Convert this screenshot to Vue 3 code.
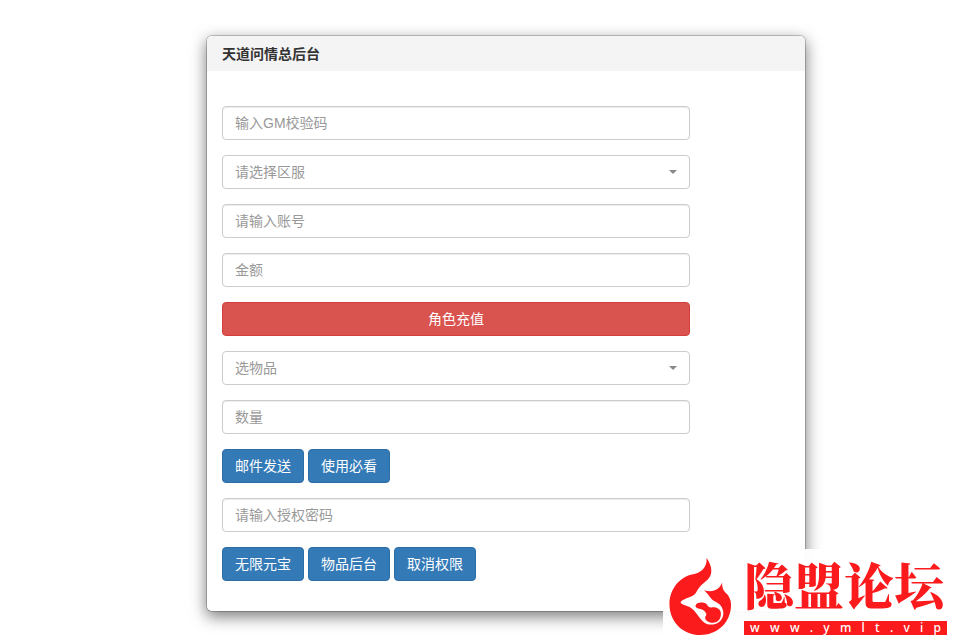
<script setup>
import { ref } from 'vue';

const gmCode = ref('');
const server = ref('');
const account = ref('');
const amount = ref('');
const item = ref('');
const count = ref('');
const password = ref('');

const siteLetters = 'www.ymlt.vip'.split('');
</script>

<template>
    <div class="page">
        <main class="panel">
            <header class="panel-header">
                <h1>天道问情总后台</h1>
            </header>

            <form class="panel-form" @submit.prevent>
                <input v-model="gmCode" type="text" class="control" placeholder="输入GM校验码" aria-label="输入GM校验码">

                <div class="select-box">
                    <select v-model="server" class="control" aria-label="请选择区服">
                        <option value="">请选择区服</option>
                    </select>
                </div>

                <input v-model="account" type="text" class="control" placeholder="请输入账号" aria-label="请输入账号">
                <input v-model="amount" type="text" class="control" placeholder="金额" aria-label="金额">

                <button type="button" class="btn btn-danger">角色充值</button>

                <div class="select-box">
                    <select v-model="item" class="control" aria-label="选物品">
                        <option value="">选物品</option>
                    </select>
                </div>

                <input v-model="count" type="text" class="control" placeholder="数量" aria-label="数量">

                <div class="btn-row">
                    <button type="button" class="btn btn-primary">邮件发送</button>
                    <button type="button" class="btn btn-primary">使用必看</button>
                </div>

                <input v-model="password" type="password" class="control" placeholder="请输入授权密码" aria-label="请输入授权密码">

                <div class="btn-row">
                    <button type="button" class="btn btn-primary">无限元宝</button>
                    <button type="button" class="btn btn-primary">物品后台</button>
                    <button type="button" class="btn btn-primary">取消权限</button>
                </div>
            </form>
        </main>

        <aside class="watermark">
            <svg class="flame" viewBox="24 18 195 243" aria-hidden="true">
                <path fill="#fb1a1c" d="M140 21C154 40 159 62 151 77C146 88 133 95 121 108C112 118 110 127 102 134C90 144 66 146 60 157C64 166 78 166 88 172C106 182 115 204 130 217C140 227 160 229 174 221C188 213 194 199 191 184C188 169 178 161 168 156C151 148 147 131 132 120C160 129 181 118 188 96C187 117 195 125 205 134C214 145 217 160 215 175C210 225 169 258 121 258C68 258 27 219 26 164C26 116 58 78 99 71C125 66 143 48 140 21Z" />
                <path fill="#fb1a1c" d="M106 169C108 159 119 157 132 159C146 162 140 174 156 173C171 172 183 178 184 190C186 205 176 220 160 220C147 221 134 212 136 203C138 198 142 196 137 189C131 178 119 179 112 176C108 174 107 172 106 169Z" />
            </svg>
            <div class="brand">
                <strong>隐盟论坛</strong>
                <div class="site" aria-label="www.ymlt.vip">
                    <span v-for="(letter, i) in siteLetters" :key="i">{{ letter }}</span>
                </div>
            </div>
        </aside>
    </div>
</template>

<style>
body {
    margin: 0;
    background: #fff;
}
</style>

<style scoped>
.page {
    position: relative;
    box-sizing: border-box;
    min-height: 100vh;
    padding: 35px 0 32px 45px;
    overflow: hidden;
    font-family: "Liberation Sans", "Noto Sans CJK SC", sans-serif;
    font-size: 14px;
    line-height: 20px;
    color: #333;
}
.panel {
    box-sizing: border-box;
    max-width: 600px;
    margin: 0 auto;
    background: #fff;
    border: 1px solid rgba(0, 0, 0, 0.2);
    background-clip: padding-box;
    border-radius: 6px;
    box-shadow: 0 5px 15px rgba(0, 0, 0, 0.5);
}
.panel-header {
    padding: 8px 15px 7px;
    background: #f4f4f4;
    border-radius: 5px 5px 0 0;
}
.panel-header h1 {
    margin: 0;
    font-size: 14px;
    font-weight: 700;
    line-height: 20px;
}
.panel-form {
    display: flex;
    flex-direction: column;
    gap: 15px;
    padding: 35px 115px 30px 15px;
}
.control {
    display: block;
    box-sizing: border-box;
    width: 100%;
    height: 34px;
    padding: 6px 12px;
    font: inherit;
    color: #555;
    background: #fff;
    border: 1px solid #ccc;
    border-radius: 4px;
    box-shadow: inset 0 1px 1px rgba(0, 0, 0, 0.075);
    outline: none;
}
.control::placeholder {
    color: #999;
    opacity: 1;
}
.select-box {
    position: relative;
}
.select-box .control {
    appearance: none;
    color: #999;
    box-shadow: none;
    cursor: pointer;
}
.select-box::after {
    content: "";
    position: absolute;
    top: 15px;
    right: 13px;
    border-top: 4px solid #888;
    border-right: 4px solid transparent;
    border-left: 4px solid transparent;
    pointer-events: none;
}
.btn {
    height: 34px;
    padding: 6px 12px;
    font: inherit;
    color: #fff;
    border: 1px solid transparent;
    border-radius: 4px;
    cursor: pointer;
}
.btn-danger {
    background: #d9534f;
    border-color: #d43f3a;
}
.btn-primary {
    background: #337ab7;
    border-color: #2e6da4;
}
.btn-row {
    display: flex;
    gap: 4px;
}
.watermark {
    position: absolute;
    right: 0;
    bottom: 0;
    display: flex;
    gap: 11px;
    box-sizing: border-box;
    width: 304px;
    height: 95px;
    padding: 8px 20px 8px 5px;
    background: rgba(255, 255, 255, 0.96);
}
.flame {
    flex: none;
    width: 65px;
    height: 79px;
}
.brand {
    display: flex;
    flex: 1;
    flex-direction: column;
    gap: 12px;
}
.brand strong {
    font-family: "Noto Serif CJK SC", "Noto Sans CJK SC", serif;
    font-size: 50px;
    font-weight: 900;
    line-height: 52px;
    color: #fb1a1c;
    white-space: nowrap;
}
.site {
    display: flex;
    justify-content: space-between;
    height: 14px;
    padding: 0 6px;
    font-family: "Noto Sans", sans-serif;
    font-size: 12px;
    font-weight: 500;
    line-height: 13px;
    color: #fff;
    background: #fb1a1c;
}
</style>
